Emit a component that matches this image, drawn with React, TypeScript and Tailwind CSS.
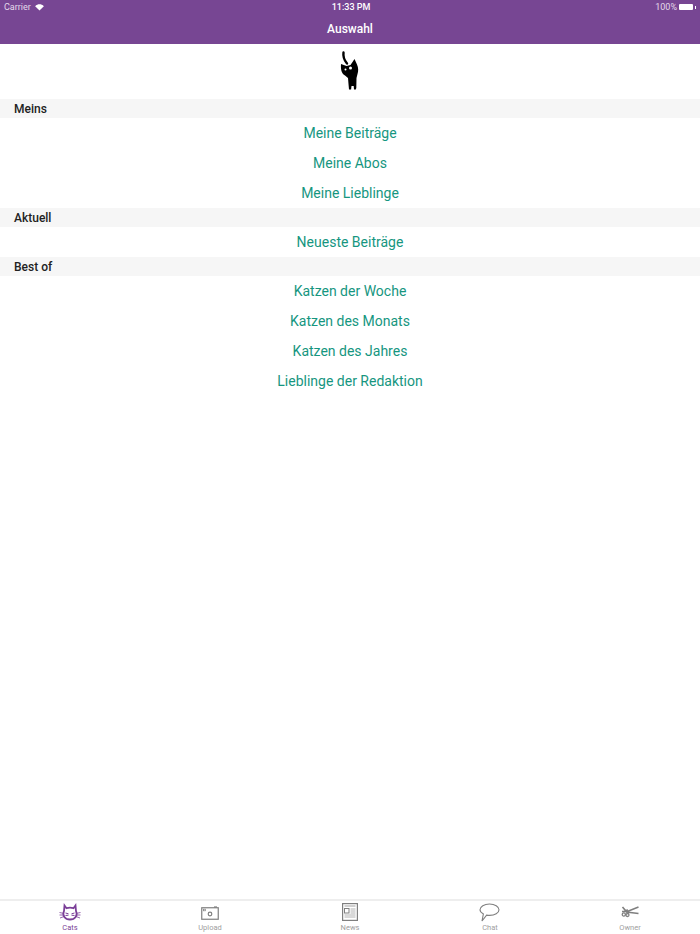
function Section({ title, items }: { title: string; items: string[] }) {
  return (
    <section>
      <div className="h-[19px] bg-[#f6f6f6] pl-[14px] text-[12px] font-medium leading-[20px] text-[#222222]">{title}</div>
      <ul>
        {items.map((t) => (
          <li key={t} className="h-[30px] text-center text-[14px] leading-[31px] text-[#16967f]">{t}</li>
        ))}
      </ul>
    </section>
  );
}

function Cat() {
  return (
    <svg width="30" height="45" viewBox="0 0 30 45" className="block -translate-x-[1px]">
      <path d="M9.5 4.5 C9 8 10 12 13 15.5" fill="none" stroke="#000" strokeWidth="2.4" strokeLinecap="round" />
      <path d="M7 16 L12.5 18 L16.5 17 L20.5 11 L23 16.5 C24.5 20 24.5 23 23.5 26 L22.5 30 L22.3 40 L21.8 41.5 L20 41.5 L19.7 38 L17.5 38 L17.1 41.5 L15 41.5 L14.5 36 L14 30 L11 27.5 C8 26 6.5 22 7 16 Z" fill="#000" />
      <circle cx="11.5" cy="21.5" r="1" fill="#fff" />
      <circle cx="16.5" cy="20" r="1.5" fill="#fff" />
    </svg>
  );
}

function CatsIcon() {
  return (
    <svg width="22" height="20" viewBox="0 0 22 20" fill="none" stroke="#7b3f98" className="mt-[1px]">
      <path d="M5.5 2.5 L7.5 5.2 C9.5 4.6 12.5 4.6 14.5 5.2 L16.5 2.5 L17 8 C19 12.5 16 16.5 11 16.5 C6 16.5 3 12.5 5 8 Z" strokeWidth="1.8" />
      <path d="M0.5 9.5 L5 10.5 M0.5 12 L5 12 M1 15 L5 13.5 M21.5 9.5 L17 10.5 M21.5 12 L17 12 M21 15 L17 13.5" strokeWidth="0.8" />
      <path d="M6.5 10 L9.5 10.8 M6.5 12.5 L9.5 12.2 M15.5 10 L12.5 10.8 M15.5 12.5 L12.5 12.2" strokeWidth="1" />
    </svg>
  );
}

function UploadIcon() {
  return (
    <svg width="18" height="14" viewBox="0 0 18 14" fill="none" stroke="#7f7f7f" className="mt-[2px]">
      <rect x="0.75" y="1.75" width="16.5" height="11.5" strokeWidth="1.2" />
      <circle cx="9" cy="8" r="1.8" strokeWidth="1.2" />
      <rect x="2.5" y="3.2" width="2" height="1.6" strokeWidth="0.7" />
      <path d="M13 1 H16" strokeWidth="1.2" />
    </svg>
  );
}

function NewsIcon() {
  return (
    <svg width="16" height="18" viewBox="0 0 16 18" fill="none" stroke="#7f7f7f">
      <rect x="0.6" y="0.6" width="14.8" height="16.8" strokeWidth="1.2" />
      <path d="M2.5 3 H13.5" strokeWidth="1.2" opacity="0.6" />
      <rect x="2.5" y="5.5" width="4.5" height="4.5" strokeWidth="1" />
      <path d="M8.5 6 H13.5 M8.5 8 H13.5 M8.5 10 H13.5 M2.5 12 H13.5 M2.5 14 H13.5" strokeWidth="1" opacity="0.6" />
    </svg>
  );
}

function ChatIcon() {
  return (
    <svg width="21" height="19" viewBox="0 0 21 19" fill="none" stroke="#7f7f7f" strokeWidth="1.1" className="-ml-[2px]">
      <path d="M10.5 1 C15.8 1 20 3.6 20 6.8 C20 10 15.8 12.4 10.5 12.4 C9.5 12.4 8.5 12.3 7.6 12.1 L3 18 L4.4 10.9 C2.2 9.8 1 8.4 1 6.8 C1 3.6 5.2 1 10.5 1 Z" />
    </svg>
  );
}

function OwnerIcon() {
  return (
    <svg width="18" height="12" viewBox="0 0 18 12" fill="none" stroke="#7f7f7f" className="-mt-[1px]">
      <path d="M5 6 L17.5 1 M5 6 L17.5 7.5" strokeWidth="1.5" />
      <path d="M1.5 1 L4.5 4.5 L7 4 M1 5.5 H6" strokeWidth="1.6" />
      <circle cx="2.8" cy="8.5" r="1.6" strokeWidth="1.3" />
      <circle cx="6.5" cy="9" r="1.5" strokeWidth="1.3" />
    </svg>
  );
}

const tabs = [
  { label: "Cats", icon: <CatsIcon />, active: true },
  { label: "Upload", icon: <UploadIcon /> },
  { label: "News", icon: <NewsIcon /> },
  { label: "Chat", icon: <ChatIcon /> },
  { label: "Owner", icon: <OwnerIcon /> },
];

export default function App() {
  return (
    <div className="flex h-[934px] w-[700px] flex-col overflow-hidden bg-white font-['Roboto',sans-serif]">
      <header className="h-[44px] bg-[#774693] text-white">
        <div className="flex h-[14px] items-center justify-between px-[4px] text-[9px] leading-[14px]">
          <div className="flex w-[200px] items-center gap-[4px] text-[#e4d9ea]">
            <span>Carrier</span>
            <svg width="9" height="7" viewBox="0 0 10 8" fill="#fff"><path d="M5 7.5 L0 2.5 C3 -0.5 7 -0.5 10 2.5 Z" /></svg>
          </div>
          <div className="pl-[2px] font-medium">11:33 PM</div>
          <div className="flex w-[200px] items-center justify-end gap-[2px] text-[#e4d9ea]">
            <span>100%</span>
            <span className="h-[6px] w-[14px] rounded-[1px] bg-white" />
            <span className="h-[3px] w-[1px] bg-white" />
          </div>
        </div>
        <h1 className="mt-[4px] text-center text-[12px] font-medium leading-[22px]">Auswahl</h1>
      </header>
      <div className="flex h-[55px] items-start justify-center pt-[4px]">
        <Cat />
      </div>
      <Section title="Meins" items={["Meine Beiträge", "Meine Abos", "Meine Lieblinge"]} />
      <Section title="Aktuell" items={["Neueste Beiträge"]} />
      <Section title="Best of" items={["Katzen der Woche", "Katzen des Monats", "Katzen des Jahres", "Lieblinge der Redaktion"]} />
      <div className="flex-1" />
      <nav className="grid h-[35px] grid-cols-5 border-t-2 border-[#eeeeee]">
        {tabs.map((t) => (
          <div key={t.label} className="flex flex-col items-center">
            <div className="flex h-[22px] items-center justify-center">{t.icon}</div>
            <span className={`text-[7.5px] leading-[9px] ${t.active ? "text-[#7b3f98]" : "text-[#a0a0a0]"}`}>{t.label}</span>
          </div>
        ))}
      </nav>
    </div>
  );
}
